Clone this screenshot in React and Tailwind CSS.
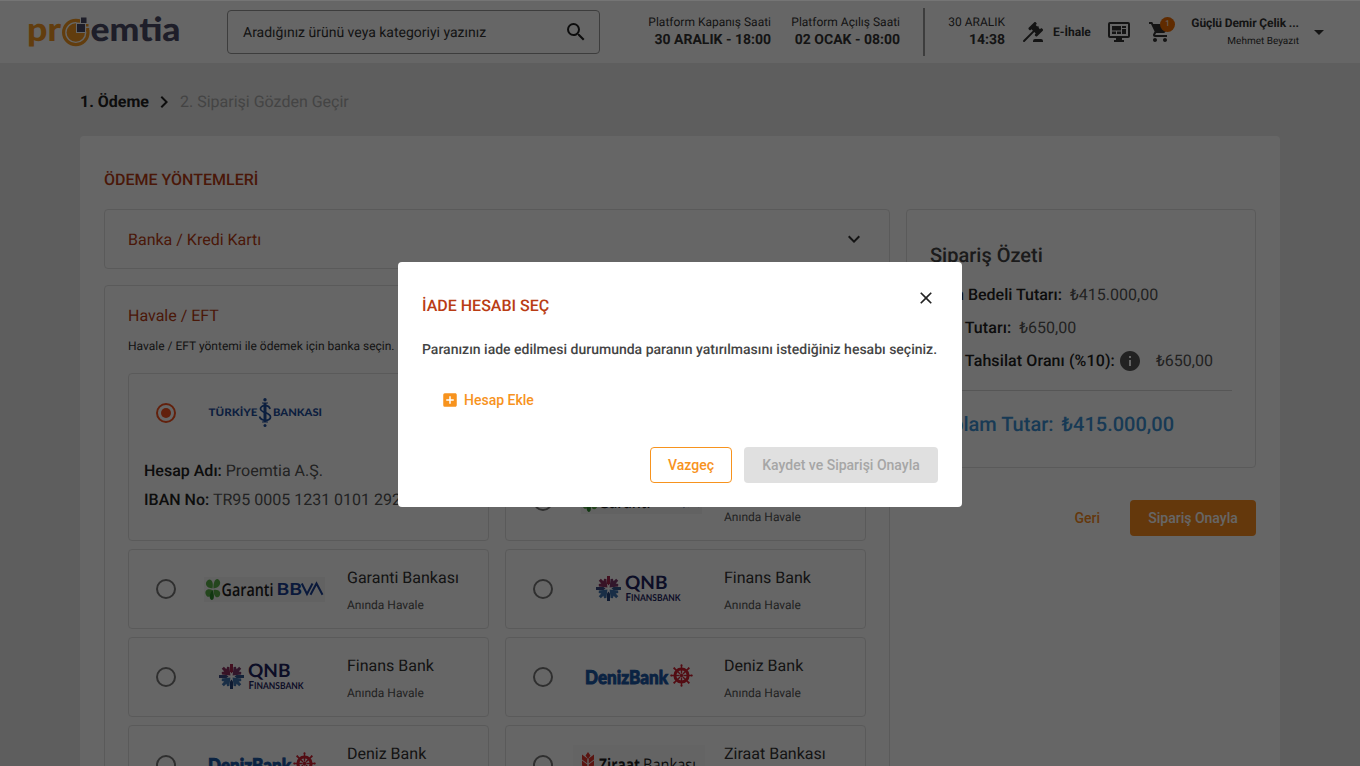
import React from "react";
import {
  MdSearch,
  MdShoppingCart,
  MdArrowDropDown,
  MdInfo,
  MdAddBox,
  MdExpandMore,
  MdClose,
  MdChevronRight,
} from "react-icons/md";

function ProemtiaLogo() {
  return (
    <svg width="153" height="36" viewBox="0 0 153 36" className="shrink-0 overflow-visible" aria-label="proemtia">
      <g fontFamily="Lato, sans-serif" fontWeight="900" fontSize="33">
        <text x="-1" y="25" textLength="34" lengthAdjust="spacingAndGlyphs" fill="#f59a23">pr</text>
        <text x="62.500" y="25" textLength="90" lengthAdjust="spacingAndGlyphs" fill="#4b4b66">emtia</text>
      </g>
      <circle cx="47.800" cy="16.500" r="12.200" fill="none" stroke="#f59a23" strokeWidth="3.200" />
      <circle cx="47.800" cy="16.500" r="9.200" fill="#f59a23" />
      <path d="M48 6.500h4V0h12v14h-6v3H48z" fill="#fff" />
      <rect x="49" y="8" width="8" height="8" fill="#4b4b66" />
      <rect x="53" y="1.500" width="5.500" height="5.500" fill="#4b4b66" />
      <rect x="58" y="8" width="2.500" height="2.500" fill="#f59a23" />
      <rect x="58.200" y="12" width="3" height="3" fill="#f59a23" />
      <rect x="48.500" y="3.500" width="3.500" height="3" fill="#f59a23" />
    </svg>
  );
}

function GavelIcon() {
  return (
    <svg width="24" height="24" viewBox="0 0 24 24" fill="currentColor" className="ml-4 shrink-0">
      <path d="M2.300 20.280l9.600-9.600-1.400-1.420-.72.710c-.39.390-1.020.390-1.410 0l-.71-.710c-.39-.390-.39-1.020 0-1.410l5.660-5.660c.39-.390 1.020-.390 1.410 0l.71.710c.39.390.39 1.020 0 1.410l-.71.690 1.420 1.430c.39-.390 1.020-.390 1.410 0s.39 1.030 0 1.420l1.410 1.410.71-.710c.39-.390 1.030-.390 1.420 0l.7.710c.39.390.39 1.030 0 1.420l-5.650 5.650c-.39.390-1.030.390-1.420 0l-.7-.7c-.4-.390-.4-1.030 0-1.420l.7-.710-1.410-1.410-9.610 9.610c-.39.390-1.020.390-1.410 0s-.39-1.030 0-1.420M20 19a2 2 0 0 1 2 2v1H12v-1a2 2 0 0 1 2-2z" />
    </svg>
  );
}

function MonitorIcon() {
  return (
    <svg width="22" height="20" viewBox="0 0 22 20" fill="#333" className="shrink-0">
      <path fillRule="evenodd" d="M2 0h18a2 2 0 0 1 2 2v12a2 2 0 0 1-2 2h-6v2h2v2H6v-2h2v-2H2a2 2 0 0 1-2-2V2a2 2 0 0 1 2-2zm0 2v12h18V2z" />
      <path d="M4 4h9v4.500H4zM4 9.500h4V12H4zM9 9.500h4V12H9zM14 4h4v2h-4zM14 7h4v5h-4z" />
    </svg>
  );
}

function IsBankLogo() {
  return (
    <svg width="114" height="30" viewBox="0 0 114 30" className="overflow-visible">
      <g fill="#1f4f9e" fontFamily="Lato, sans-serif" fontWeight="900" fontSize="10.500">
        <text x="0.500" y="18.200" textLength="49" lengthAdjust="spacingAndGlyphs">TÜRKİYE</text>
        <text x="65" y="18.200" textLength="49" lengthAdjust="spacingAndGlyphs">BANKASI</text>
      </g>
      <g fill="none" stroke="#1f4f9e">
        <path d="M57 5v19" strokeWidth="3" />
        <path d="M54 5h6M54 24h6" strokeWidth="1.200" />
        <path d="M62 11c-1-5-10-4-9.500 0 .5 4 10 3.500 10 8s-9.500 4.500-11-.5" strokeWidth="1.800" />
      </g>
      <circle cx="57" cy="1.800" r="1.700" fill="#1f4f9e" />
      <circle cx="57" cy="27.500" r="1.500" fill="#1f4f9e" />
    </svg>
  );
}

function GarantiLogo() {
  return (
    <svg width="121" height="25" viewBox="0 0 121 25" className="ml-[6px] shrink-0">
      <rect width="121" height="25" fill="#f4f4f4" />
      <g fill="#5bb04a">
        <path d="M8.500 11.500C2 11 0 6 4 3c3-2 6 2 4.500 8.500zM9.500 11.500C9 5 12 0 15 3c3 3 0 8-5.500 8.500zM8.500 13C3 11 0 14 2 18c2 4 7 1 6.500-5zM9.500 13c6-1 8 3 6 6s-6 1-6-6z" />
        <path d="M8.500 13c-3 4-4 8-1 10 3 0 3-5 1-10z" fill="#2c8a2c" />
      </g>
      <text x="17.500" y="18.500" textLength="52" lengthAdjust="spacingAndGlyphs" fill="#1c1c1c" fontFamily="Open Sans, sans-serif" fontWeight="600" fontSize="17.500">Garanti</text>
      <text x="72.500" y="18" textLength="25.500" lengthAdjust="spacingAndGlyphs" fill="#1b3f95" fontFamily="Lato, sans-serif" fontWeight="700" fontSize="16.500">BB</text>
      <path d="M97.800 6.500l5.200 10.500 5.500-10.500M106.500 17.800l6-11.300 6 11.300" fill="none" stroke="#1b3f95" strokeWidth="2" />
    </svg>
  );
}

const BARS = [
  [0, "#a82850"], [90, "#33588f"], [180, "#24437c"], [270, "#3c4a82"],
];
const ARROWS = [
  [45, "#7c3a6c"], [135, "#3f74b0"], [225, "#3f74b0"], [315, "#8c3060"],
];

function QnbLogo() {
  return (
    <svg width="85" height="28" viewBox="0 0 85 28" className="overflow-visible">
      {ARROWS.map(([a, c]) => (
        <path key={a} d="M11 1.200h3v3.600l2.300-1.300 1.500 1.700-5.300 6.800-5.300-6.800 1.500-1.700L11 4.800z" fill={c} transform={`rotate(${a} 12.500 13.500)`} />
      ))}
      {BARS.map(([a, c]) => (
        <path key={a} d="M11 1h3v7.500l-1.500 2-1.500-2z" fill={c} transform={`rotate(${a} 12.500 13.500)`} />
      ))}
      <g fill="#1e2460" fontFamily="Lato, sans-serif">
        <text x="29" y="14" fontSize="18.500" fontWeight="700" textLength="42.500" lengthAdjust="spacingAndGlyphs">QNB</text>
        <text x="29.500" y="25.500" fontSize="11" fontWeight="700" textLength="55" lengthAdjust="spacingAndGlyphs">F<tspan fontSize="9.500">INANSBANK</tspan></text>
      </g>
    </svg>
  );
}

const SPOKES = [0, 45, 90, 135, 180, 225, 270, 315];

function DenizLogo() {
  return (
    <svg width="108" height="24" viewBox="0 0 108 24" className="overflow-visible">
      <text x="0" y="19" textLength="83" lengthAdjust="spacingAndGlyphs" fill="#1b57a6" stroke="#1b57a6" strokeWidth=".9" fontFamily="Lato, sans-serif" fontWeight="900" fontSize="19">DenizBank</text>
      <g transform="translate(96.500 10.500)" stroke="#cf2030" fill="none">
        <circle r="6.600" strokeWidth="3" />
        {SPOKES.map((a) => (
          <path key={a} d="M0-2v-9" strokeWidth="1.400" transform={`rotate(${a})`} />
        ))}
        {SPOKES.map((a) => (
          <circle key={`k${a}`} cy="-10" r="1" fill="#cf2030" stroke="none" transform={`rotate(${a})`} />
        ))}
        <circle r="1.800" fill="#cf2030" stroke="none" />
      </g>
    </svg>
  );
}

function ZiraatLogo() {
  return (
    <svg width="132" height="40" viewBox="0 0 132 40" className="shrink-0">
      <rect width="132" height="40" fill="#fbfbfb" />
      <path
        fill="#e0352b"
        d="M15 7l2.500 3.500-2.500 3.500-2.500-3.500zM9 9.500l5.300 4v5l-5.300-4zM21 9.500l-5.300 4v5l5.300-4zM9 15.500l5.300 4v5l-5.300-4zM21 15.500l-5.300 4v5l5.300-4zM9 21.500l5.300 4v5l-5.300-4zM21 21.500l-5.300 4v5l5.300-4z"
      />
      <text x="26" y="25.500" fill="#1e1e1e" fontFamily="Open Sans, sans-serif" fontSize="17.500" textLength="41" lengthAdjust="spacingAndGlyphs" fontWeight="700">Ziraat</text>
      <text x="70" y="25.500" fill="#1e1e1e" fontFamily="Open Sans, sans-serif" fontSize="17.500" textLength="53" lengthAdjust="spacingAndGlyphs">Bankası</text>
    </svg>
  );
}

function Radio({ checked }) {
  return (
    <span className={`flex size-5 shrink-0 items-center justify-center rounded-full border-2 ${checked ? "border-[#f4511e]" : "border-[#757575]"}`}>
      {checked && <span className="size-2.5 rounded-full bg-[#f4511e]" />}
    </span>
  );
}

function BankCard({ name, logo }) {
  return (
    <div className="flex h-20 w-[361px] items-center rounded border border-[#e0e0e0] pl-[27px]">
      <Radio />
      <div className="ml-[21px] flex h-10 w-[129px] items-center justify-center">{logo}</div>
      <div className="ml-[21px] pt-0.5">
        <div className="text-base leading-6 text-[#333]">{name}</div>
        <div className="mt-[5px] text-xs leading-5 text-[#555]">Anında Havale</div>
      </div>
    </div>
  );
}

function PlatformTime({ label, value }) {
  return (
    <div className="flex flex-col items-end whitespace-nowrap">
      <span className="text-xs leading-4">{label}</span>
      <span className="pt-px text-sm leading-[18px] font-bold">{value}</span>
    </div>
  );
}

function Header() {
  return (
    <header className="flex h-[63px] items-center bg-white text-[#333]">
      <div className="w-[227px] shrink-0 pt-1 pl-7">
        <ProemtiaLogo />
      </div>
      <div className="mt-px flex h-11 w-[373px] shrink-0 items-center justify-between rounded border border-[#999] pr-[11px] pl-[15px] text-sm">
        <span className="pt-0.5">Aradığınız ürünü veya kategoriyi yazınız</span>
        <MdSearch size={24} className="text-[#222]" />
      </div>
      <div className="flex w-[171px] justify-end">
        <PlatformTime label="Platform Kapanış Saati" value="30 ARALIK - 18:00" />
      </div>
      <div className="flex w-[129px] justify-end">
        <PlatformTime label="Platform Açılış Saati" value="02 OCAK - 08:00" />
      </div>
      <div className="ml-[23px] h-12 w-0.5 bg-[#999]" />
      <div className="flex w-20 justify-end">
        <PlatformTime label="30 ARALIK" value="14:38" />
      </div>
      <GavelIcon />
      <span className="ml-2 w-[55px] text-xs font-bold">E-İhale</span>
      <MonitorIcon />
      <div className="relative ml-[18px] shrink-0">
        <MdShoppingCart size={24} />
        <span className="absolute -top-[3px] right-[-3px] flex size-[15px] items-center justify-center rounded-full bg-[#ef6c00] text-[8px] text-white">1</span>
      </div>
      <div className="flex w-[127px] flex-col items-end pt-px whitespace-nowrap">
        <span className="text-xs leading-4 font-bold tracking-[-0.1px]">Güçlü Demir Çelik ...</span>
        <span className="mt-[3px] text-[10px] leading-4">Mehmet Beyazıt</span>
      </div>
      <MdArrowDropDown size={24} className="ml-2 shrink-0" />
    </header>
  );
}

function SummaryRow({ label, value, info }) {
  return (
    <div className="flex h-[33px] items-center text-base">
      <span className="font-medium text-[#222]">{label}</span>
      {info && <MdInfo size={24} className="mr-[6px] ml-[3px] text-[#555]" />}
      <span className="ml-2 text-[#555]">{value}</span>
    </div>
  );
}

function Summary() {
  return (
    <aside className="w-[350px]">
      <div className="h-[259px] rounded border border-[#e0e0e0] px-[23px] pt-[29px]">
        <h2 className="text-xl leading-8 font-medium text-[#444]">Sipariş Özeti</h2>
        <div className="mt-[7px]">
          <SummaryRow label="Ürün Bedeli Tutarı:" value="₺415.000,00" />
          <SummaryRow label={<span className="tracking-[0.08px]">KDV Tutarı:</span>} value="₺650,00" />
          <SummaryRow label={<span className="tracking-[0.1px]">İade Tahsilat Oranı (%10):</span>} value="₺650,00" info />
        </div>
        <div className="mt-[13px] h-px bg-[#d6d6d6]" />
        <div className="mt-[17px] flex gap-[9px] text-xl leading-8 font-medium text-[#3c92d4]">
          <span className="-mr-px">Toplam Tutar:</span>
          <span>₺415.000,00</span>
        </div>
      </div>
      <div className="mt-8 flex h-9 items-center justify-end text-sm font-medium">
        <button className="text-[#fb8c1e]">Geri</button>
        <button className="ml-[30px] h-9 w-[126px] rounded bg-[#fb8c1e] text-white">Sipariş Onayla</button>
      </div>
    </aside>
  );
}

function Payment() {
  return (
    <div className="w-[786px]">
      <section className="flex h-[60px] items-center justify-between rounded border border-[#e0e0e0] px-[23px] text-[#b93c14]">
        <span className="pt-0.5">Banka / Kredi Kartı</span>
        <MdExpandMore size={24} className="text-[#333]" />
      </section>
      <section className="mt-4 rounded border border-[#e0e0e0] px-[23px] pt-[18px]">
        <div className="leading-6 text-[#b93c14]">Havale / EFT</div>
        <div className="mt-2 text-xs leading-5 text-[#333]">Havale / EFT yöntemi ile ödemek için banka seçin.</div>
        <div className="mt-[17px] flex gap-4">
          <div className="flex flex-col gap-2">
            <div className="h-[168px] w-[361px] rounded border border-[#e0e0e0] pt-[19px]">
              <div className="flex h-10 items-center pl-[27px]">
                <Radio checked />
                <div className="ml-[32px]"><IsBankLogo /></div>
              </div>
              <div className="pt-[23px] pl-[15px] leading-[29px] whitespace-nowrap text-[#555]">
                <div><b className="font-medium text-[#222]">Hesap Adı:</b> Proemtia A.Ş.</div>
                <div><b className="font-medium text-[#222]">IBAN No:</b> TR95 0005 1231 0101 2923 45</div>
              </div>
            </div>
            <BankCard name="Garanti Bankası" logo={<GarantiLogo />} />
            <BankCard name="Finans Bank" logo={<QnbLogo />} />
            <BankCard name="Deniz Bank" logo={<DenizLogo />} />
          </div>
          <div className="flex flex-col gap-2">
            <BankCard name="İş Bankası" logo={<IsBankLogo />} />
            <BankCard name="Garanti Bankası" logo={<GarantiLogo />} />
            <BankCard name="Finans Bank" logo={<QnbLogo />} />
            <BankCard name="Deniz Bank" logo={<DenizLogo />} />
            <BankCard name="Ziraat Bankası" logo={<ZiraatLogo />} />
          </div>
        </div>
      </section>
    </div>
  );
}

function RefundDialog() {
  return (
    <div className="absolute inset-0 flex items-center justify-center border-t border-white/10 bg-black/60">
      <div className="mt-[2px] h-[245px] w-[564px] rounded bg-white px-6 pt-6">
        <div className="flex items-start justify-between">
          <h2 className="pt-2 text-base leading-6 font-medium text-[#b93c14]">İADE HESABI SEÇ</h2>
          <MdClose size={20} className="mt-0.5 mr-0.5 text-[#222]" />
        </div>
        <p className="mt-5 text-sm leading-6 font-medium whitespace-nowrap text-[#444]">
          Paranızın iade edilmesi durumunda paranın yatırılmasını istediğiniz hesabı seçiniz.
        </p>
        <button className="mt-[26px] ml-[19px] flex h-6 items-center gap-[5px] text-sm font-medium text-[#f7931e]">
          <MdAddBox size={18} />
          Hesap Ekle
        </button>
        <div className="mt-[35px] flex justify-end gap-3 text-sm font-medium">
          <button className="h-9 w-[82px] rounded border border-[#f7931e] text-[#f7931e]">Vazgeç</button>
          <button className="h-9 w-[194px] rounded bg-[#e0e0e0] text-[#a6a6a6]">Kaydet ve Siparişi Onayla</button>
        </div>
      </div>
    </div>
  );
}

export default function App() {
  return (
    <div className="relative h-[766px] w-[1360px] overflow-hidden bg-[#ebebeb] font-[Roboto,sans-serif] [text-rendering:geometricPrecision]">
      <Header />
      <nav className="mt-[27px] flex h-6 items-center pl-20">
        <span className="font-bold text-[#222]">1. Ödeme</span>
        <MdChevronRight size={24} className="mr-1 ml-[3px] text-[#222]" />
        <span className="text-[#aaa]">2. Siparişi Gözden Geçir</span>
      </nav>
      <main className="mx-20 mt-[22px] h-[800px] rounded bg-white px-6 pt-8">
        <h1 className="text-base leading-6 font-medium text-[#b93c14]">ÖDEME YÖNTEMLERİ</h1>
        <div className="mt-[17px] flex gap-4">
          <Payment />
          <Summary />
        </div>
      </main>
      <RefundDialog />
    </div>
  );
}
